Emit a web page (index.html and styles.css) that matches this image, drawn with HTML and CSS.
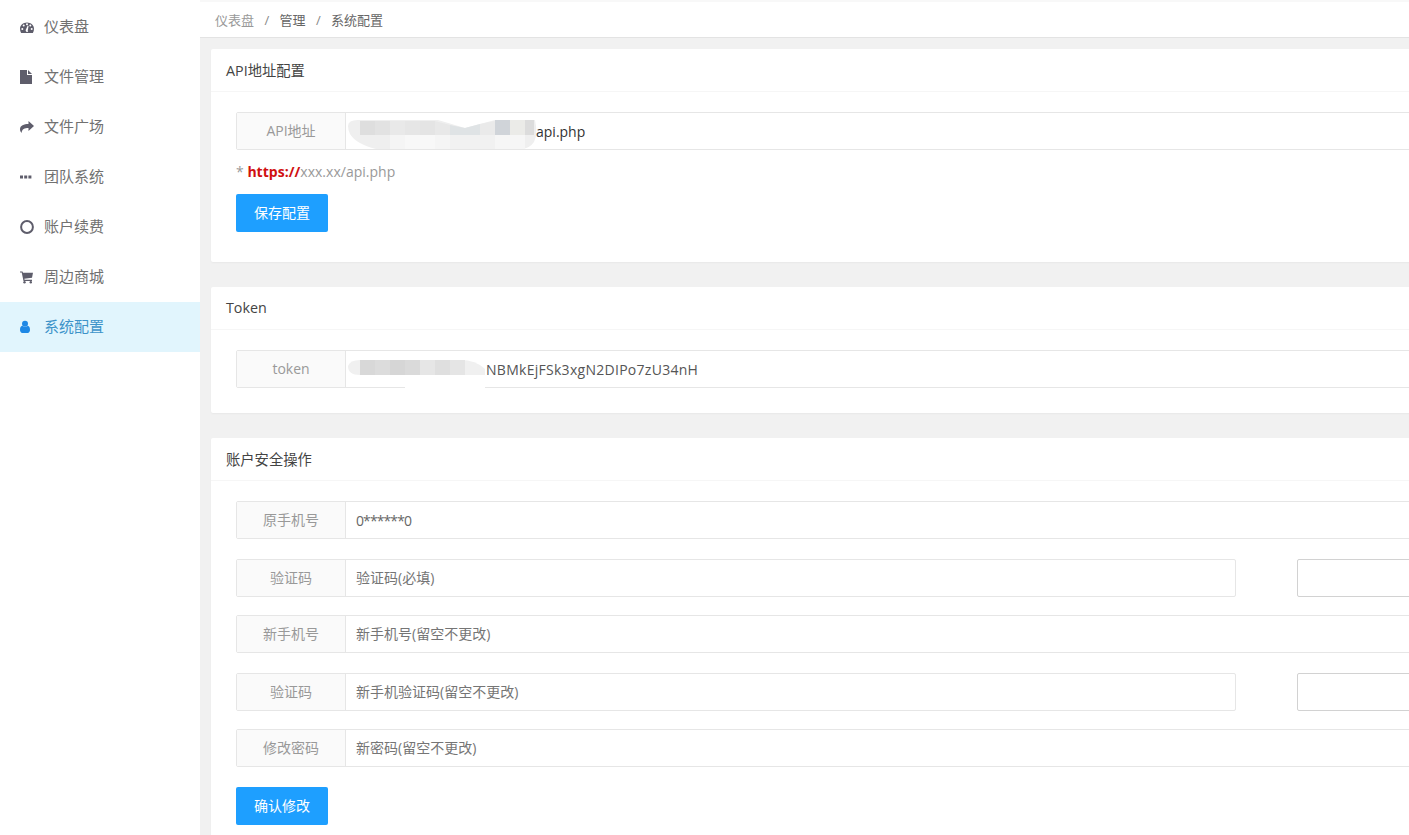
FILE: index.html
```html
<!DOCTYPE html>
<html lang="zh-CN">
<head>
<meta charset="utf-8">
<title>系统配置</title>
<link rel="stylesheet" href="styles.css">
</head>
<body>
<div class="app">
  <nav class="sidebar">
    <a class="nav-item"><svg class="nav-icon" viewBox="0 0 14 14"><path fill-rule="evenodd" d="M7 2.500C3.100 2.500 0 5.300 0 8.800c0 1.600.4 3 1.100 4.200h11.800c.7-1.200 1.100-2.600 1.100-4.200 0-3.500-3.100-6.300-7-6.300ZM2.300 10a1 1 0 1 1 0-2 1 1 0 0 1 0 2ZM3.700 6.600a1 1 0 1 1 0-2 1 1 0 0 1 0 2ZM7 5.300a1 1 0 1 1 0-2 1 1 0 0 1 0 2Zm1.200 6.200a1.500 1.500 0 0 1-2.500-1.400l2-4.500.9.300-.9 4.800.5.800ZM10.300 6.600a1 1 0 1 1 0-2 1 1 0 0 1 0 2Zm1.400 3.400a1 1 0 1 1 0-2 1 1 0 0 1 0 2Z"/></svg><span>仪表盘</span></a>
    <a class="nav-item"><svg class="nav-icon" viewBox="0 0 14 14"><path d="M0 0h7v5h5v9H0Z"/><path d="M8 0l4 4H8Z"/></svg><span>文件管理</span></a>
    <a class="nav-item"><svg class="nav-icon" viewBox="0 0 14 14"><path d="M8.500 1 14 6 8.500 11V8C4.500 8 2 8.800 1.600 13 .5 12 0 10.500 0 9.300 0 5.500 4 4 8.500 4Z"/></svg><span>文件广场</span></a>
    <a class="nav-item"><svg class="nav-icon" viewBox="0 0 14 14"><path d="M0 5.500h3v3H0ZM4.200 5.500h3v3h-3ZM8.400 5.500h3v3h-3Z"/></svg><span>团队系统</span></a>
    <a class="nav-item"><svg class="nav-icon" viewBox="0 0 14 14"><circle cx="7" cy="7" r="5.900" fill="none" stroke="currentColor" stroke-width="2"/></svg><span>账户续费</span></a>
    <a class="nav-item"><svg class="nav-icon" viewBox="0 0 14 14"><path d="M0 1.500h2.500l.5 1.300H13l-1 5-7.700.9.300 1.100H12v1.100H3.500L1.700 2.600H0Z"/><circle cx="4.500" cy="12.300" r="1.200"/><circle cx="10.800" cy="12.300" r="1.200"/></svg><span>周边商城</span></a>
    <a class="nav-item active"><svg class="nav-icon" viewBox="0 0 14 14"><circle cx="5" cy="3.800" r="3"/><path d="M0 10c0-2.500.8-4 2.200-4.200C3 6.500 4 7 5 7s2-.5 2.800-1.200C9.200 6 10 7.500 10 10c0 1.500-1 3-2.300 3H2.300C1 13 0 11.500 0 10Z"/></svg><span>系统配置</span></a>
  </nav>
  <main class="main">
    <header class="crumbs">
      <span class="crumb-first">仪表盘</span><span class="sep">/</span><span>管理</span><span class="sep">/</span><span>系统配置</span>
    </header>
    <div class="content">
      <section class="card">
        <h2 class="card-title"><span>API地址配置</span></h2>
        <div class="card-body">
          <div class="field field-redacted">
            <label class="field-label"><span>API地址</span></label>
            <div class="field-value value-dark value-api">api.php</div>
            <svg class="patch patch-api" viewBox="0 0 192 34">
              <path fill="#efefef" d="M2 8Q2 2 12 2H92L119 10 149 2H189Q192 16 188 24 184 30 176 31H30Q10 26 4 16 2 12 2 8Z"/>
              <path fill="#dedede" d="M14 3h15v14H14Z"/>
              <path fill="#e2e2e2" d="M29 3h15v14H29Z"/>
              <path fill="#e9e9e9" d="M44 3h15v14H44Z"/>
              <path fill="#e6e6e6" d="M59 3h15v14H59Z"/>
              <path fill="#e4e4e4" d="M74 3h15v14H74Z"/>
              <path fill="#e8e8e8" d="M89 3l15 4v10H89Z"/>
              <path fill="#dfe3e5" d="M104 7l15 3 15-4v11h-30Z"/>
              <path fill="#eaeaea" d="M134 6l15-3v14h-15Z"/>
              <path fill="#d0d4d9" d="M149 2h15v15h-15Z"/>
              <path fill="#ebebe8" d="M164 2h15v15h-15Z"/>
              <path fill="#dcdcdc" d="M179 2h9v15h-9Z"/>
              <path fill="#f5f5f5" d="M44 17h60v14H44Z"/>
              <path fill="#f8f8f8" d="M59 17h30v14H59Z"/>
              <path fill="#f1f1f1" d="M104 17h45v14h-45Z"/>
              <path fill="#f6f6f6" d="M149 17h30v14h-30Z"/>
            </svg>
          </div>
          <p class="hint">* <b class="hint-strong">https://</b>xxx.xx/api.php</p>
          <button class="btn"><span>保存配置</span></button>
        </div>
      </section>
      <section class="card">
        <h2 class="card-title"><span>Token</span></h2>
        <div class="card-body body-tight">
          <div class="field field-redacted">
            <label class="field-label"><span>token</span></label>
            <div class="field-value value-dark value-token">NBMkEjFSk3xgN2DIPo7zU34nH</div>
            <svg class="patch patch-token" viewBox="0 0 140 46">
              <path fill="#fff" d="M59 17H139V40H59Z"/>
              <path fill="#f0f0f0" d="M2 8Q4 2 14 2H114Q130 2 139 11V17H14Q2 17 2 8Z"/>
              <path fill="#d8d8d8" d="M14 2h15v15H14Z"/>
              <path fill="#dcdcdc" d="M29 2h15v15H29Z"/>
              <path fill="#d6d6d6" d="M44 2h15v15H44Z"/>
              <path fill="#dadada" d="M59 2h15v15H59Z"/>
              <path fill="#e6e6e6" d="M74 2h15v15H74Z"/>
              <path fill="#dfdfdf" d="M89 2h15v15H89Z"/>
              <path fill="#e5e5e5" d="M104 2h15v15h-15Z"/>
            </svg>
          </div>
        </div>
      </section>
      <section class="card">
        <h2 class="card-title"><span>账户安全操作</span></h2>
        <div class="card-body">
          <div class="field">
            <label class="field-label"><span>原手机号</span></label>
            <div class="field-value value-mid">0******0</div>
          </div>
          <div class="code-row">
            <div class="field field-code">
              <label class="field-label"><span>验证码</span></label>
              <div class="field-value"><span>验证码(必填)</span></div>
            </div>
            <div class="code-btn"></div>
          </div>
          <div class="field">
            <label class="field-label"><span>新手机号</span></label>
            <div class="field-value"><span>新手机号(留空不更改)</span></div>
          </div>
          <div class="code-row">
            <div class="field field-code">
              <label class="field-label"><span>验证码</span></label>
              <div class="field-value"><span>新手机验证码(留空不更改)</span></div>
            </div>
            <div class="code-btn"></div>
          </div>
          <div class="field">
            <label class="field-label"><span>修改密码</span></label>
            <div class="field-value"><span>新密码(留空不更改)</span></div>
          </div>
          <button class="btn"><span>确认修改</span></button>
        </div>
      </section>
    </div>
  </main>
</div>
</body>
</html>
```

FILE: styles.css
```css
* { box-sizing: border-box; }
html, body { margin: 0; height: 835px; overflow: hidden; background: #f1f1f1; }
body {
  font-family: "Open Sans", "Noto Sans CJK SC", sans-serif;
  font-size: 14px;
  color: #666;
}
.app { display: flex; width: 1600px; height: 835px; }
.sidebar { flex: 0 0 200px; padding-top: 2px; background: #fff; }
.nav-item {
  display: flex;
  align-items: center;
  height: 50px;
  padding-left: 20px;
  font-size: 15px;
  color: #717171;
}
.nav-item span { display: block; padding-bottom: 3px; }
.nav-icon { flex: 0 0 14px; width: 14px; height: 14px; margin-right: 10px; fill: #5e5d6b; color: #5e5d6b; }
.nav-item.active { background: #e1f5fd; color: #3d93c9; }
.active .nav-icon { fill: #1e88e5; color: #1e88e5; }
.main { flex: 0 0 1400px; min-width: 0; }
.crumbs {
  display: flex;
  align-items: center;
  height: 38px;
  padding: 0 0 0 15px;
  background: #fff;
  border-top: 2px solid #f8f8f8;
  border-bottom: 1px solid #e3e3e3;
  font-size: 13px;
  color: #666;
}
.crumb-first { color: #999; }
.sep { width: 25.5px; text-align: center; color: #888; }
.content { padding: 11px 0 0 11px; }
.card {
  width: 1320px;
  margin-bottom: 25px;
  background: #fff;
  border-radius: 2px;
  box-shadow: 0 1px 2px rgba(0, 0, 0, .04);
}
.card-title {
  display: flex;
  align-items: center;
  height: 43px;
  margin: 0;
  padding-left: 15px;
  border-bottom: 1px solid #f6f6f6;
  font-size: 14.3px;
  font-weight: 400;
  color: #444;
}
.card-title span { display: block; padding-bottom: 2px; }
.card-body { padding: 20px 25px 30px; }
.body-tight { padding-bottom: 25px; }
.field {
  position: relative;
  display: flex;
  height: 38px;
  margin-bottom: 20px;
  border: 1px solid #e6e6e6;
  border-radius: 2px;
  background: #fff;
}
.field-redacted { margin-bottom: 0; }
.field-label {
  flex: 0 0 109px;
  display: flex;
  align-items: center;
  justify-content: center;
  background: #fafafa;
  border-right: 1px solid #e6e6e6;
  color: #999;
}
.field-label span { display: block; padding-bottom: 2px; }
.field-value {
  flex: 1;
  display: flex;
  align-items: center;
  padding-left: 10px;
  font-size: 14px;
  color: #757575;
}
.field-value span { display: block; padding-bottom: 2px; }
.value-dark { color: #333; }
.value-mid { color: #666; letter-spacing: -.9px; }
.value-api { padding-left: 190px; }
.value-token { padding-left: 140px; color: #555; letter-spacing: .28px; }
.patch { position: absolute; display: block; }
.patch-api { left: 109px; top: 5px; width: 192px; height: 34px; }
.patch-token { left: 109px; top: 7px; width: 140px; height: 46px; }
.hint { margin: 11px 0 12px; height: 21px; line-height: 21px; color: #999; font-size: 14px; letter-spacing: .02px; }
.hint-strong { color: #d01010; font-weight: 700; }
.btn {
  display: block;
  width: 92px;
  height: 38px;
  padding: 0;
  border: 0;
  border-radius: 2px;
  background: #1e9fff;
  color: #fff;
  font: inherit;
  font-size: 14px;
}
.btn span { display: block; padding-bottom: 2px; }
.code-row { display: flex; gap: 61px; margin-bottom: 18px; }
.field-code { flex: 0 0 1000px; margin-bottom: 0; }
.code-btn {
  flex: 0 0 200px;
  height: 38px;
  border: 1px solid #d2d2d2;
  border-radius: 2px;
  background: #fff;
}
```
